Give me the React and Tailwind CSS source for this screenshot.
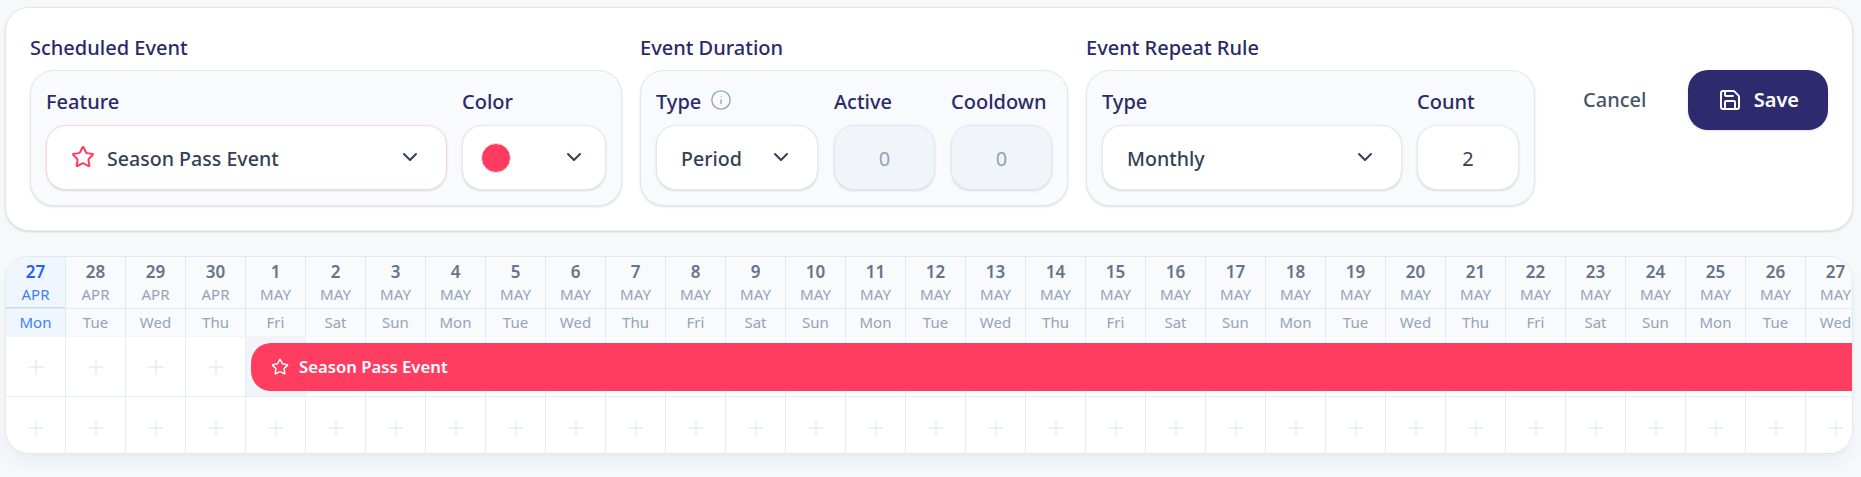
import { ChevronDown, Info, Plus, Save, Star } from "lucide-react";

const days = [
  ["27", "APR", "Mon"], ["28", "APR", "Tue"], ["29", "APR", "Wed"], ["30", "APR", "Thu"],
  ["1", "MAY", "Fri"], ["2", "MAY", "Sat"], ["3", "MAY", "Sun"], ["4", "MAY", "Mon"],
  ["5", "MAY", "Tue"], ["6", "MAY", "Wed"], ["7", "MAY", "Thu"], ["8", "MAY", "Fri"],
  ["9", "MAY", "Sat"], ["10", "MAY", "Sun"], ["11", "MAY", "Mon"], ["12", "MAY", "Tue"],
  ["13", "MAY", "Wed"], ["14", "MAY", "Thu"], ["15", "MAY", "Fri"], ["16", "MAY", "Sat"],
  ["17", "MAY", "Sun"], ["18", "MAY", "Mon"], ["19", "MAY", "Tue"], ["20", "MAY", "Wed"],
  ["21", "MAY", "Thu"], ["22", "MAY", "Fri"], ["23", "MAY", "Sat"], ["24", "MAY", "Sun"],
  ["25", "MAY", "Mon"], ["26", "MAY", "Tue"], ["27", "MAY", "Wed"],
];

const Label = ({ children }) => (
  <div className="flex items-center h-[28px] pt-[3px] text-[20px] font-medium text-[#2a2a6a]">{children}</div>
);

const SelectBox = ({ className, children }) => (
  <div className={`flex items-center justify-between h-[65px] rounded-[20px] bg-white border shadow-sm text-[19.6px] font-medium text-[#334155] ${className}`}>
    <span className="flex items-center pt-[2px]">{children}</span>
    <ChevronDown size={24} className="-mt-[1px] text-[#334155]" />
  </div>
);

const NumberBox = ({ value, disabled, className }) => (
  <div className={`flex items-center justify-center h-[65px] pt-[2px] rounded-[20px] border border-[#e2e8f0] shadow-sm text-[20px] ${disabled ? "bg-[#f1f5f9] text-[#94a3b8]" : "bg-white text-[#334155]"} ${className}`}>
    {value}
  </div>
);

const Field = ({ label, className, children }) => (
  <div className={`flex flex-col gap-[11px] ${className}`}>
    <Label>{label}</Label>
    {children}
  </div>
);

const Group = ({ title, width, children }) => (
  <div className={`flex flex-col ${width}`}>
    <h2 className="h-[30px] mb-[8px] pt-[2px] flex items-center text-[20px] font-medium text-[#2a2a6a]">{title}</h2>
    <div className="flex gap-[15px] h-[136px] px-[15px] pt-[15px] rounded-[24px] bg-[#f8fafc] border border-[#e2e8f0] shadow-sm">
      {children}
    </div>
  </div>
);

const GridRow = ({ height, cellClass, highlight }) => (
  <div className={`flex ${height}`}>
    {days.map((d, i) => (
      <div
        key={i}
        className={`flex shrink-0 w-[60px] items-center justify-center border-r border-[#e8edf3] ${cellClass} ${i === highlight ? "bg-[#f1f5f9]" : "bg-white"}`}
      >
        <Plus size={24} strokeWidth={1.25} className="text-[#e2e8f0]" />
      </div>
    ))}
  </div>
);

export default function App() {
  return (
    <div className="min-h-screen bg-[#f6f8fa] pt-[7px] pl-[5px] pr-[8px] font-['Noto_Sans',sans-serif]">
      <div className="flex h-[224px] pt-[24px] pl-[24px] rounded-[24px] bg-white border border-[#e2e8f0] shadow-sm">
        <div className="flex gap-[18px]">
          <Group title="Scheduled Event" width="w-[592px]">
            <Field label="Feature" className="w-[401px]">
              <SelectBox className="border-[#ffd5dc] pl-[24px] pr-[24px]">
                <Star size={24} strokeWidth={2} className="mr-[12px] -mt-[2px] text-[#ff3b5f]" />
                Season Pass Event
              </SelectBox>
            </Field>
            <Field label="Color" className="w-[144px]">
              <SelectBox className="border-[#e2e8f0] pl-[18px] pr-[19px]">
                <span className="-mt-[2px] w-[30px] h-[30px] rounded-full bg-[#ff3b5f] border border-[#e2e8f0]" />
              </SelectBox>
            </Field>
          </Group>
          <Group title="Event Duration" width="w-[428px]">
            <div className="flex gap-[16px]">
              <Field label={<>Type <Info size={22} strokeWidth={1.5} className="ml-[9px] -mt-[3px] text-[#94a3b8]" /></>} className="w-[162px]">
                <SelectBox className="border-[#e2e8f0] pl-[24px] pr-[24px]">Period</SelectBox>
              </Field>
              <Field label="Active" className="w-[101px]">
                <NumberBox value="0" disabled />
              </Field>
              <Field label="Cooldown" className="w-[101px]">
                <NumberBox value="0" disabled />
              </Field>
            </div>
          </Group>
          <Group title="Event Repeat Rule" width="w-[449px]">
            <Field label="Type" className="w-[300px]">
              <SelectBox className="border-[#e2e8f0] pl-[24px] pr-[24px]">Monthly</SelectBox>
            </Field>
            <Field label="Count" className="w-[102px]">
              <NumberBox value="2" />
            </Field>
          </Group>
        </div>
        <div className="flex items-start gap-[42px] pt-[38px] pl-[48px]">
          <button className="h-[60px] text-[20px] font-medium text-[#475569]">Cancel</button>
          <button className="flex items-center justify-center gap-[12px] w-[140px] h-[60px] rounded-[20px] bg-[#2d2a6e] text-white text-[20px] font-semibold shadow-sm">
            <Save size={24} />
            Save
          </button>
        </div>
      </div>

      <div className="relative mt-[25px] overflow-hidden rounded-[24px] border border-[#e2e8f0] bg-white shadow-lg shadow-slate-200/60">
        <div className="flex h-[52px] border-b border-[#e2e8f0]">
          {days.map((d, i) => (
            <div
              key={i}
              className={`flex flex-col shrink-0 w-[60px] items-center justify-center border-r border-[#e2e8f0] ${i === 0 ? "bg-[#eff6ff] border-b border-b-[#bfdbfe]" : "bg-[#f8fafc]"}`}
            >
              <span className={`mb-[1px] text-[17px] leading-[22px] font-semibold ${i === 0 ? "text-[#2563eb]" : "text-[#64748b]"}`}>{d[0]}</span>
              <span className={`text-[15px] leading-[20px] ${i === 0 ? "text-[#3b82f6]" : "text-[#94a3b8]"}`}>{d[1]}</span>
            </div>
          ))}
        </div>
        <div className="flex h-[28px] border-b border-[#f1f5f9]">
          {days.map((d, i) => (
            <div
              key={i}
              className={`flex shrink-0 w-[60px] items-center justify-center border-r border-[#e2e8f0] text-[15px] ${i === 0 ? "bg-[#eff6ff] text-[#3b82f6]" : "bg-[#f8fafc] text-[#94a3b8]"}`}
            >
              {d[2]}
            </div>
          ))}
        </div>
        <div className="border-b border-[#e8edf3]">
          <GridRow height="h-[59px]" highlight={4} />
        </div>
        <GridRow height="h-[56px]" cellClass="pt-[6px]" />
        <div className="absolute left-[245px] right-0 top-[86px] flex items-center gap-[10px] h-[48px] pl-[20px] rounded-l-[20px] bg-[#ff3d60] text-white text-[16.7px] font-semibold">
          <Star size={18} strokeWidth={2} />
          Season Pass Event
        </div>
      </div>
    </div>
  );
}
